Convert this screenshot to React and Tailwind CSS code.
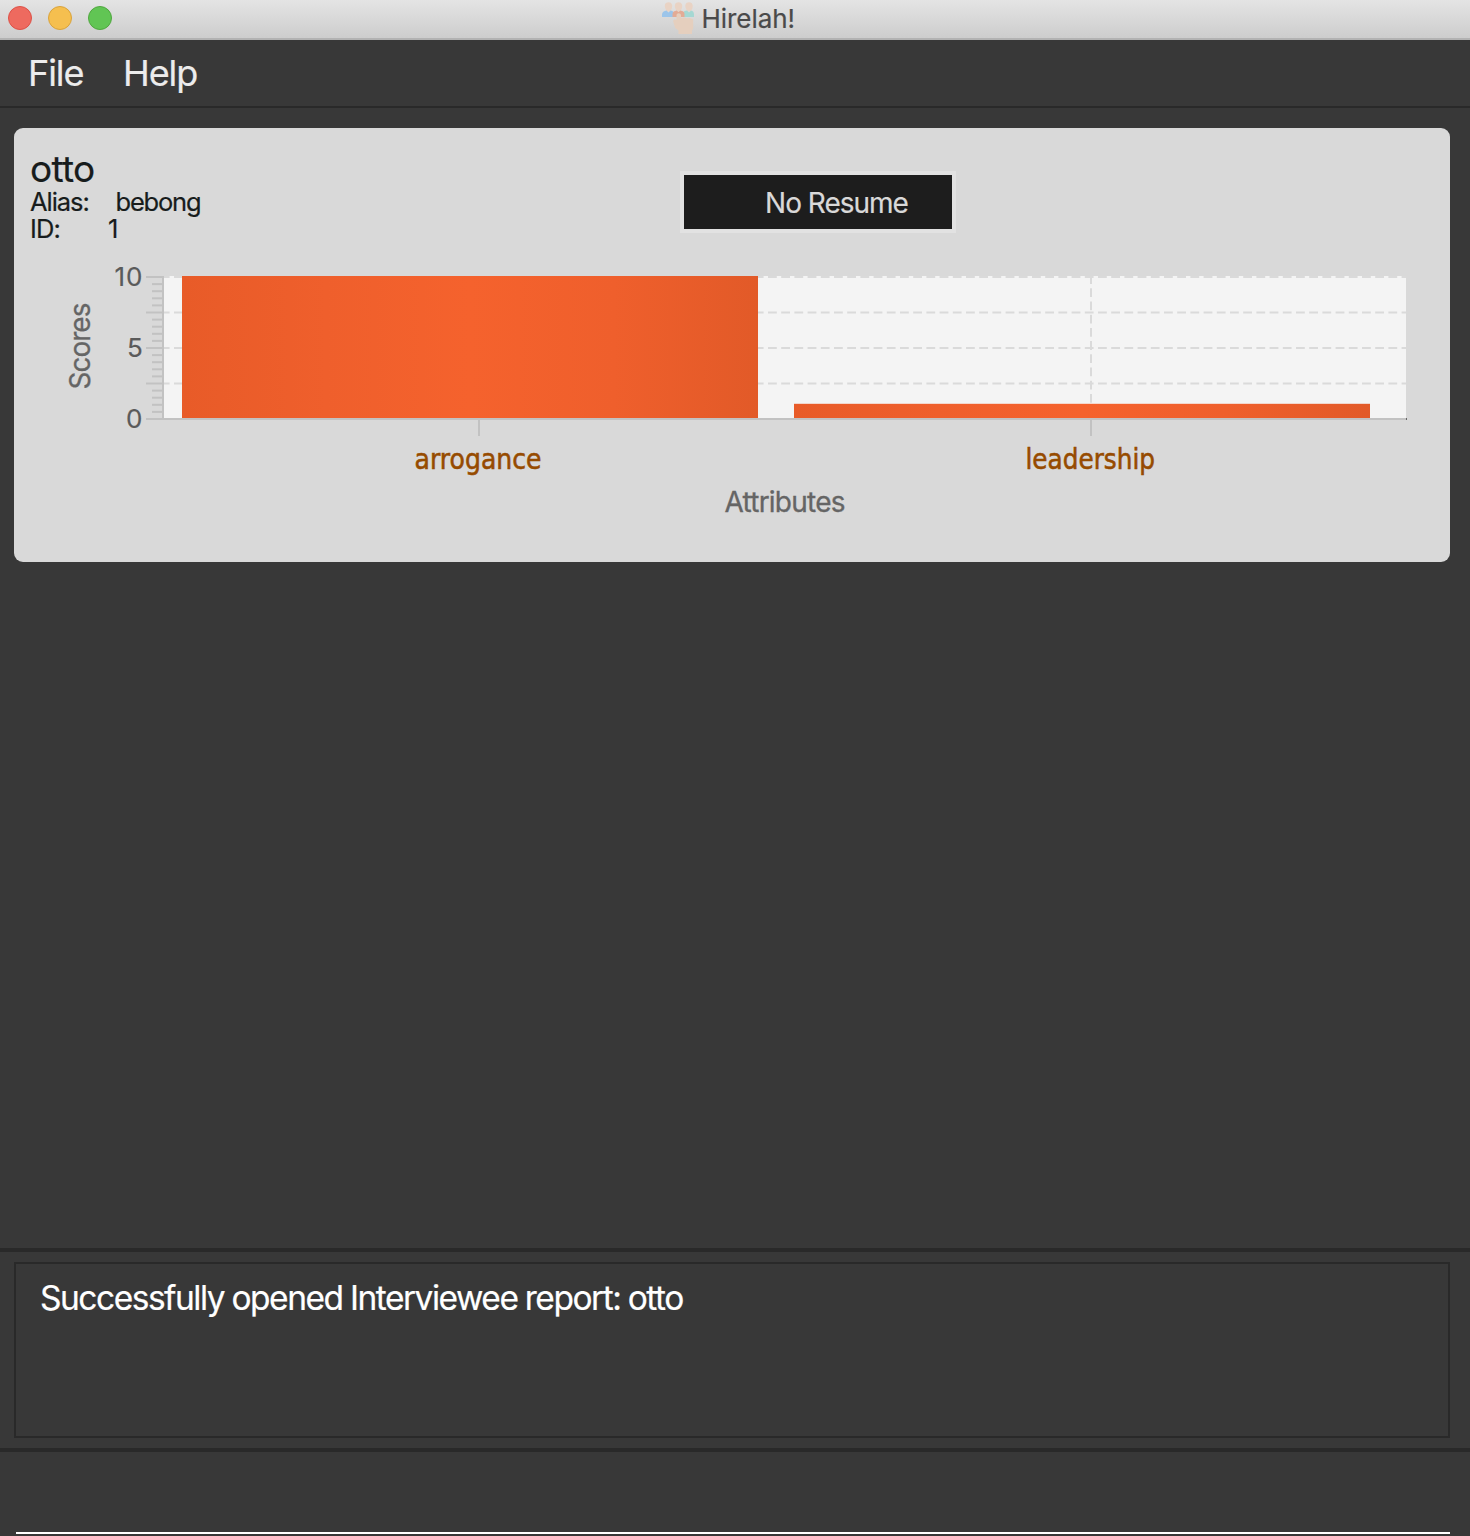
const GRID = [277, 312.5, 348, 383.5];
const MINOR = Array.from({ length: 19 }, (_, i) => 277 + (i + 1) * 7.1).filter((_, i) => (i + 1) % 5 !== 0);
const ATTRIBUTES = [
  { name: "arrogance", bar: 182, tick: 479, top: 276, left: 414.5, width: 127 },
  { name: "leadership", bar: 794, tick: 1091, top: 403.8, left: 1025.5, width: 129.5 },
];

function HireIcon() {
  return (
    <svg className="h-[36px] w-[34px]" viewBox="0 0 34 36">
      <g fill="#e9d3c4">
        <path d="M3.800 5.500C3.800 1 11.200 1 11.200 5.500S9.500 9.500 9.500 11.500h-4c0-2-1.700-2.500-1.700-6z" />
        <path d="M13.800 5.500c0-4.500 7.400-4.500 7.400 0s-1.700 4-1.700 6h-4c0-2-1.700-2.500-1.700-6z" />
        <path d="M24.300 5.500c0-4.500 7.400-4.500 7.400 0s-1.700 4-1.700 6h-4c0-2-1.700-2.500-1.700-6z" />
      </g>
      <path d="M1 17v-2.500C1 12 3 11 5.500 10.500l2 2 2-2c1.800.3 3 1 3 2.500v4z" fill="#9cc5ea" />
      <path d="M22.500 17v-4c0-1.500 1-2.200 3.500-2.500l2 2 2-2c2 .4 3 1.500 3 4V17z" fill="#a5d8d3" />
      <path d="M11.500 17v-3c0-2.200 2-3 4-3.500l2 1.500 2-1.500c2.200.5 4 1.300 4 3.500v3z" fill="#e3ab95" />
      <path d="M15.500 15.500c0-3 4.500-3 4.500 0V18l3-.5 3 .8 3-.3 3.200 1.500V28L31 31v3H17.500v-3.500l-3.300-2.500-2-6.500c0-2 1.800-2.500 3.300-1.500z" fill="#e5cfbe" />
    </svg>
  );
}

function ScoreChart() {
  return (
    <svg className="block h-[270px] w-[1436px]" viewBox="14 255 1436 270" fontFamily="Inter, sans-serif">
      <defs>
        <linearGradient id="bar">
          <stop offset="0" stopColor="#e85b28" />
          <stop offset=".25" stopColor="#ef5f2c" />
          <stop offset=".5" stopColor="#f5622d" />
          <stop offset=".75" stopColor="#ef5f2c" />
          <stop offset="1" stopColor="#e25a28" />
        </linearGradient>
      </defs>
      <rect x="164" y="276" width="1242" height="142" fill="#f4f4f4" />
      <g stroke="#dadada" strokeWidth="2" strokeDasharray="8.8 4.4">
        {GRID.map((y) => <path key={y} d={`M164 ${y}H1406`} strokeDashoffset="3.2" />)}
        <path d="M1091 276V418" strokeDashoffset="0.9" />
      </g>
      {ATTRIBUTES.map((a) => (
        <g key={a.name}>
          <rect x={a.bar} y={a.top} width="576" height={418 - a.top} fill="url(#bar)" />
          <path d={`M${a.tick} 420V436`} stroke="#c2c2c2" strokeWidth="2" />
          <text x={a.left} y="468.500" fontSize="28.500" fontFamily="'DejaVu Sans', sans-serif" fill="#964b00" stroke="#964b00" strokeWidth=".6" textLength={a.width} lengthAdjust="spacingAndGlyphs">{a.name}</text>
        </g>
      ))}
      <g stroke="#c2c2c2" strokeWidth="2">
        <path d="M163 276V419M146 419H1406" />
        {GRID.map((y) => <path key={y} d={`M146 ${y}H163`} />)}
        {MINOR.map((y) => <path key={y} d={`M152 ${y}H163`} />)}
      </g>
      <rect x="1406" y="418" width="1" height="2" fill="#666" />
      <g fill="#5a5a5a" stroke="#5a5a5a" strokeWidth=".2" fontSize="26">
        <text x="114.500" y="286" textLength="28">10</text>
        <text x="127" y="357">5</text>
        <text x="126" y="428">0</text>
      </g>
      <g fill="#656565" stroke="#656565" strokeWidth=".3" fontSize="28">
        <text transform="translate(90 389.500) rotate(-90)" textLength="87">Scores</text>
        <text x="724.500" y="512" textLength="121">Attributes</text>
      </g>
    </svg>
  );
}

export default function App() {
  return (
    <div className="flex h-[1536px] w-[1470px] flex-col overflow-hidden bg-[#383838] font-['Inter',sans-serif] whitespace-nowrap [-webkit-text-stroke:0.2px]">
      <header className="flex h-10 shrink-0 border-b-2 border-[#b2b2b2] bg-linear-to-b from-[#e4e4e4] to-[#cdcdcd]">
        <div className="flex w-[661px] gap-4 pt-1.5 pl-2">
          <span className="size-6 rounded-full border border-[#dd5147] bg-[#ee6a5f]" />
          <span className="size-6 rounded-full border border-[#d9a33c] bg-[#f5bf4f]" />
          <span className="size-6 rounded-full border border-[#50a73f] bg-[#61c554]" />
        </div>
        <HireIcon />
        <h1 className="ml-[6.500px] text-[26px] leading-[38px] tracking-[-0.050px] text-[#4a4a4a]">Hirelah!</h1>
      </header>

      <nav className="flex h-[68px] shrink-0 border-b-2 border-[#292929] pl-[28px] text-[36px] leading-[66px] tracking-[-1.100px] text-[#ececec]">
        <span className="w-[95px]">File</span>
        <span>Help</span>
      </nav>

      <main className="h-[1140px] shrink-0 pt-5 pl-3.5">
        <section className="h-[434px] w-[1436px] rounded-[9px] bg-[#d9d9d9] text-[#171c1c]">
          <div className="flex h-[127px] pl-4">
            <div className="w-[650px] pt-[22px]">
              <h2 className="text-[37px] leading-[38px] tracking-[-0.700px]">otto</h2>
              <div className="flex text-[25.500px] leading-[27px] tracking-[-1.200px]">
                <span className="w-[85.500px] tracking-[-1.050px]">Alias:</span>
                <span>bebong</span>
              </div>
              <div className="flex text-[25.500px] leading-[27px] tracking-[-0.900px]">
                <span className="w-[78px]">ID:</span>
                <span>1</span>
              </div>
            </div>
            <button className="mt-[43px] h-[62px] w-[276px] border-4 border-[#e2e2e2] bg-[#1d1d1d] pt-0.5 pl-[37px] text-center text-[28px] tracking-[-1px] text-[#d9d9d9]">No Resume</button>
          </div>
          <ScoreChart />
        </section>
      </main>

      <section className="h-[204px] shrink-0 border-y-4 border-[#292929] px-3.5 py-2.5">
        <div className="h-[176px] w-[1436px] border-2 border-[#292929] pt-[13px] pl-6 text-[33.500px] leading-[42px] tracking-[-1.480px] [word-spacing:-0.600px] text-white">
          Successfully opened Interviewee report: otto
        </div>
      </section>

      <div className="mr-5 ml-4 h-[82px] shrink-0 border-b-2 border-white" />
    </div>
  );
}
